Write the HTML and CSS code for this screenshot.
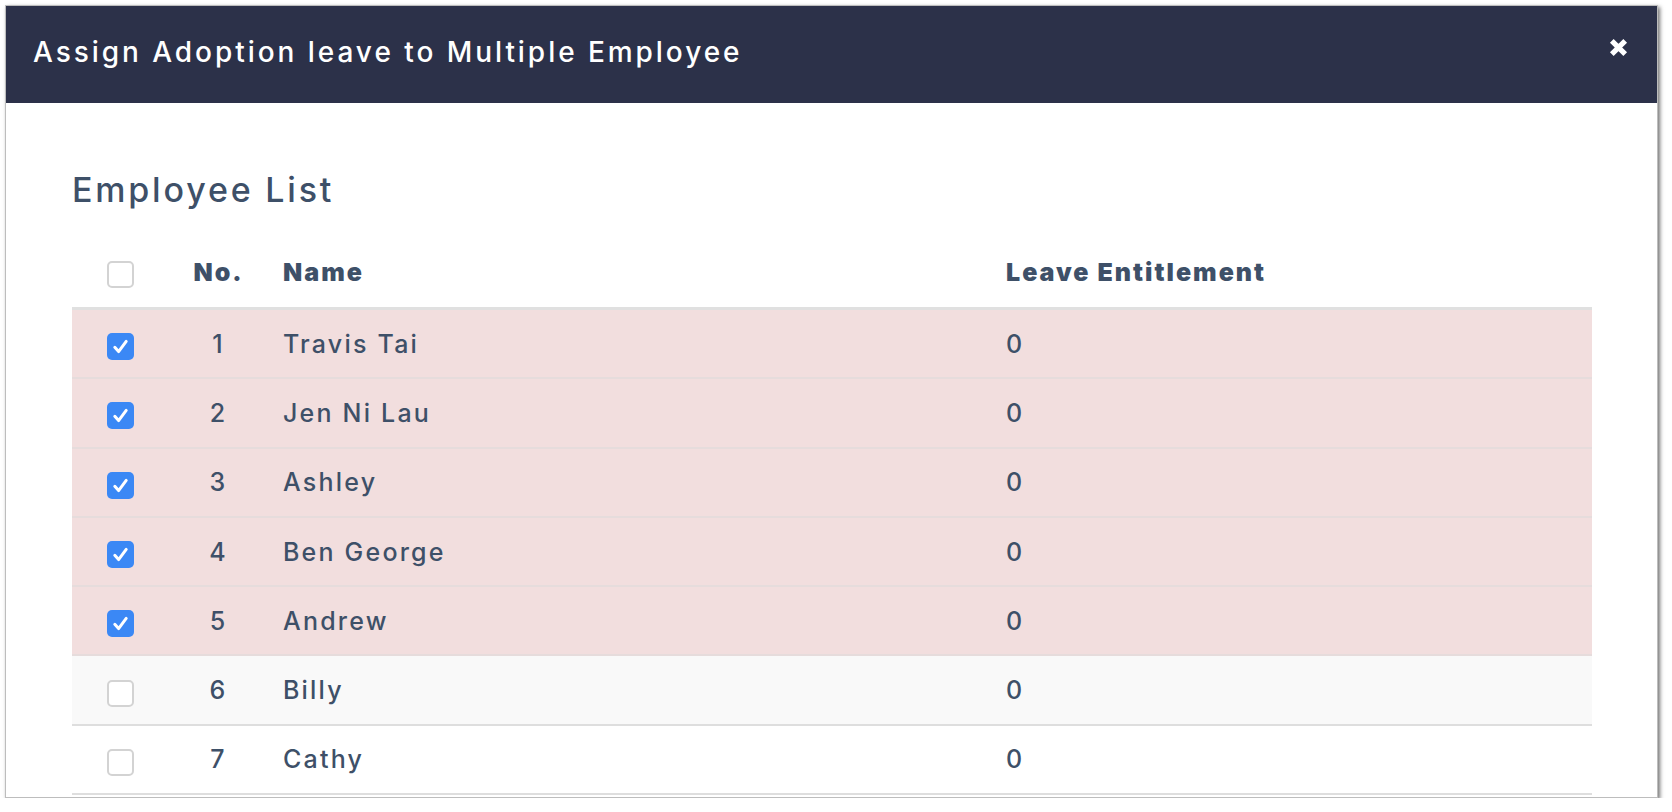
FILE: index.html
```html
<!DOCTYPE html>
<html>
<head>
<meta charset="utf-8">
<link rel="stylesheet" href="styles.css">
</head>
<body>
<div class="dialog">
  <div class="modal-header">
    <h1 class="modal-title">Assign Adoption leave to Multiple Employee</h1>
    <button class="close" aria-label="Close">
      <svg width="19" height="19" viewBox="0 0 19 19"><path d="M2.8 2.8 L16.2 16.2 M16.2 2.8 L2.8 16.2" stroke="#fff" stroke-width="5.2" stroke-linecap="butt" fill="none"/></svg>
    </button>
  </div>
  <div class="modal-body">
    <h2 class="list-title">Employee List</h2>
    <div class="table">
      <div class="row head">
        <div class="cell c-check"><span class="cb"></span></div>
        <div class="cell c-no">No.</div>
        <div class="cell c-name">Name</div>
        <div class="cell c-ent">Leave Entitlement</div>
      </div>
      <div class="row selected">
        <div class="cell c-check"><span class="cb checked"><svg viewBox="0 0 27 27"><path d="M7.8 14.3 L11.6 18.6 L19.2 8.4" /></svg></span></div>
        <div class="cell c-no">1</div>
        <div class="cell c-name">Travis Tai</div>
        <div class="cell c-ent">0</div>
      </div>
      <div class="row selected">
        <div class="cell c-check"><span class="cb checked"><svg viewBox="0 0 27 27"><path d="M7.8 14.3 L11.6 18.6 L19.2 8.4" /></svg></span></div>
        <div class="cell c-no">2</div>
        <div class="cell c-name">Jen Ni Lau</div>
        <div class="cell c-ent">0</div>
      </div>
      <div class="row selected">
        <div class="cell c-check"><span class="cb checked"><svg viewBox="0 0 27 27"><path d="M7.8 14.3 L11.6 18.6 L19.2 8.4" /></svg></span></div>
        <div class="cell c-no">3</div>
        <div class="cell c-name">Ashley</div>
        <div class="cell c-ent">0</div>
      </div>
      <div class="row selected">
        <div class="cell c-check"><span class="cb checked"><svg viewBox="0 0 27 27"><path d="M7.8 14.3 L11.6 18.6 L19.2 8.4" /></svg></span></div>
        <div class="cell c-no">4</div>
        <div class="cell c-name">Ben George</div>
        <div class="cell c-ent">0</div>
      </div>
      <div class="row selected">
        <div class="cell c-check"><span class="cb checked"><svg viewBox="0 0 27 27"><path d="M7.8 14.3 L11.6 18.6 L19.2 8.4" /></svg></span></div>
        <div class="cell c-no">5</div>
        <div class="cell c-name">Andrew</div>
        <div class="cell c-ent">0</div>
      </div>
      <div class="row striped">
        <div class="cell c-check"><span class="cb"></span></div>
        <div class="cell c-no">6</div>
        <div class="cell c-name">Billy</div>
        <div class="cell c-ent">0</div>
      </div>
      <div class="row">
        <div class="cell c-check"><span class="cb"></span></div>
        <div class="cell c-no">7</div>
        <div class="cell c-name">Cathy</div>
        <div class="cell c-ent">0</div>
      </div>
    </div>
  </div>
</div>
</body>
</html>
```
FILE: styles.css
```css
html, body {
  margin: 0;
  padding: 0;
  background: #ffffff;
}
body {
  font-family: "Inter", "Open Sans", "Liberation Sans", sans-serif;
  color: #3e5068;
}
.dialog {
  box-sizing: border-box;
  margin: 5px 0 0 5px;
  width: 1653px;
  height: 793px;
  border: 1px solid #bdbdbd;
  box-shadow: 2px 2px 4px rgba(0, 0, 0, 0.55);
  background: #fff;
  overflow: hidden;
  display: flex;
  flex-direction: column;
}
.modal-header {
  height: 97px;
  flex: none;
  background: #2c3149;
  display: flex;
  align-items: center;
  justify-content: space-between;
  padding: 0 29px 5px 27px;
  box-sizing: border-box;
}
.modal-title {
  margin: 0;
  color: #ffffff;
  font-size: 28px;
  line-height: 28px;
  font-weight: 500;
  letter-spacing: 2.95px;
}
.close {
  align-self: flex-start;
  margin-top: 32px;
  background: none;
  border: 0;
  padding: 0;
  width: 19px;
  height: 19px;
  display: block;
}
.close svg { display: block; }
.modal-body {
  padding: 67px 65px 0 66px;
}
.list-title {
  margin: 0 0 27px 0;
  font-size: 34px;
  line-height: 40px;
  font-weight: 500;
  letter-spacing: 2.8px;
  color: #3e5068;
}
.table {
  width: 1520px;
}
.row {
  display: grid;
  grid-template-columns: 97px 97px 723px 1fr;
  height: 69.3px;
  box-sizing: border-box;
  border-bottom: 2px solid #dedede;
  font-size: 25px;
  font-weight: 500;
  letter-spacing: 2.2px;
}
.row.head {
  height: 73px;
  border-bottom: 3px solid #e0e0e0;
  font-weight: 900;
  letter-spacing: 2px;
}
.row.selected { background: #f2dede; border-bottom-color: #e6dcdc; }
.row.striped { background: #f9f9f9; }
.cell {
  display: flex;
  align-items: center;
}
.c-check { justify-content: center; }
.c-no { justify-content: center; padding-left: 2px; }
.c-name { padding-left: 17px; }
.c-ent { padding-left: 17px; }
.cb {
  box-sizing: border-box;
  width: 27px;
  height: 27px;
  border-radius: 5px;
  border: 2px solid #d3d3d3;
  background: #fff;
  margin-top: 6px;
  display: block;
}
.row.head .cb { margin-top: 4px; }
.cb.checked {
  border: 0;
  background: #3b88f5;
}
.cb svg {
  display: block;
  width: 27px;
  height: 27px;
}
.cb svg path {
  fill: none;
  stroke: #ffffff;
  stroke-width: 3;
  stroke-linecap: round;
  stroke-linejoin: round;
}
```
